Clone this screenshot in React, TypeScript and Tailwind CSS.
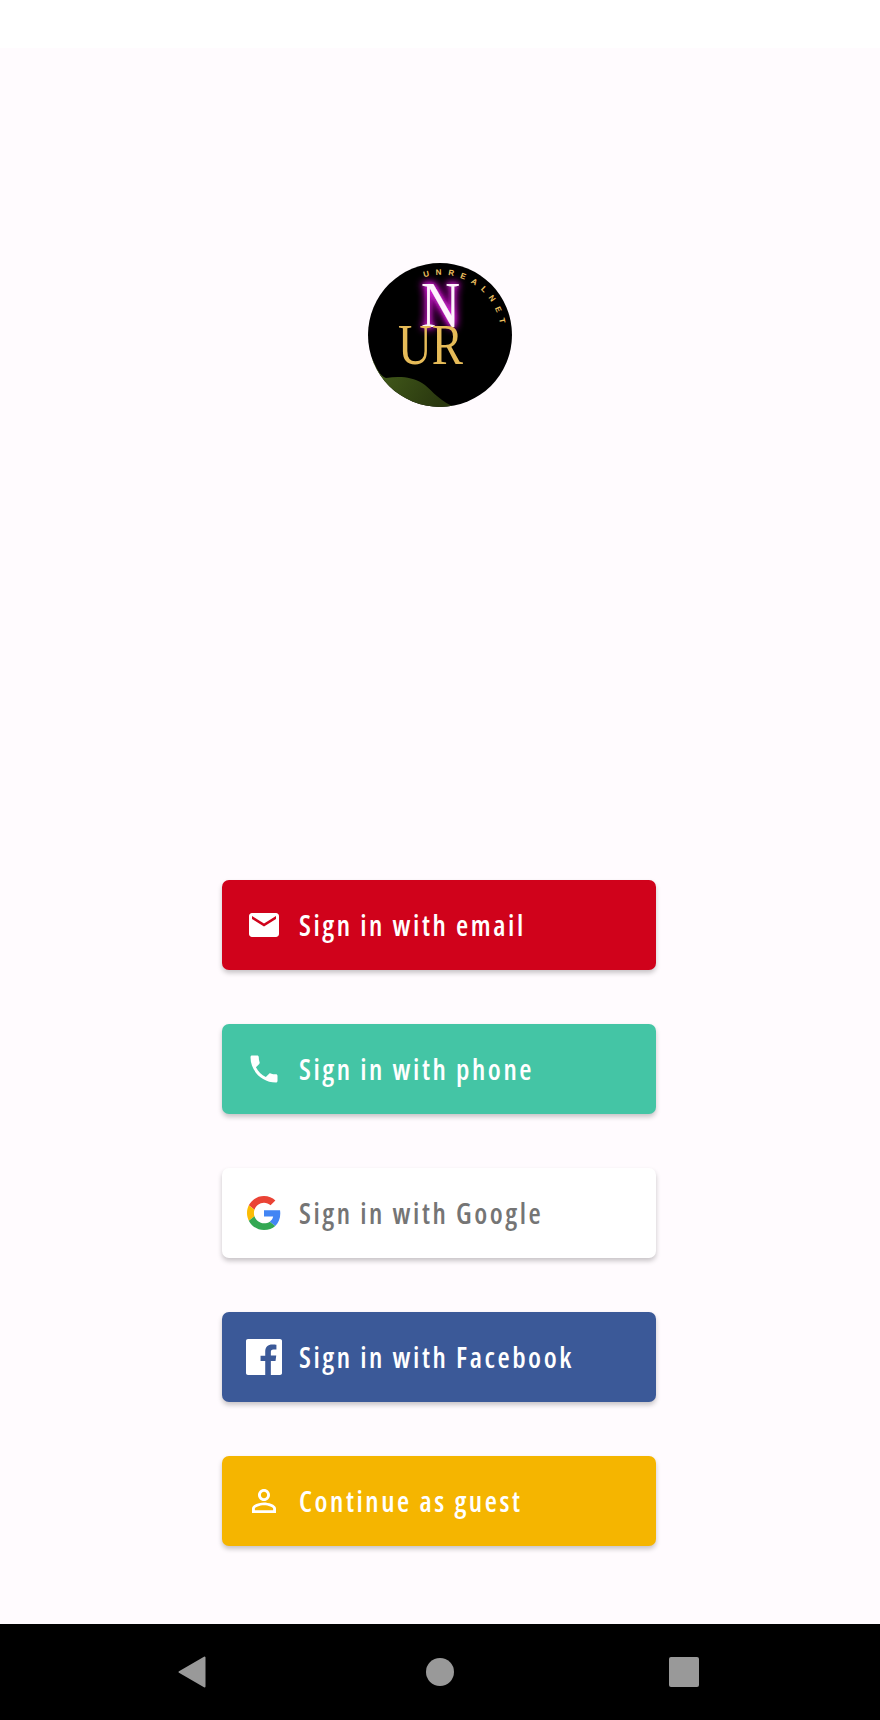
import React from "react";

const MailIcon = () => (
  <svg viewBox="0 0 24 24" className="w-9 h-9 shrink-0" fill="#fff">
    <path d="M20 4H4c-1.1 0-1.99.9-1.99 2L2 18c0 1.1.9 2 2 2h16c1.1 0 2-.9 2-2V6c0-1.1-.9-2-2-2zm0 4l-8 5-8-5V6l8 5 8-5v2z" />
  </svg>
);

const PhoneIcon = () => (
  <svg viewBox="0 0 24 24" className="w-9 h-9 shrink-0" fill="#fff">
    <path d="M6.62 10.79c1.44 2.83 3.76 5.14 6.59 6.59l2.2-2.2c.27-.27.67-.36 1.02-.24 1.12.37 2.33.57 3.57.57.55 0 1 .45 1 1V20c0 .55-.45 1-1 1-9.39 0-17-7.61-17-17 0-.55.45-1 1-1h3.5c.55 0 1 .45 1 1 0 1.25.2 2.45.57 3.57.11.35.03.74-.25 1.02l-2.2 2.2z" />
  </svg>
);

const GoogleIcon = () => (
  <svg viewBox="0 0 48 48" className="w-9 h-9 shrink-0 p-px">
    <path fill="#EA4335" d="M24 9.5c3.54 0 6.71 1.22 9.21 3.6l6.85-6.85C35.9 2.38 30.47 0 24 0 14.62 0 6.51 5.38 2.56 13.22l7.98 6.19C12.43 13.72 17.74 9.5 24 9.5z" />
    <path fill="#4285F4" d="M46.98 24.55c0-1.57-.15-3.09-.38-4.55H24v9.02h12.94c-.58 2.96-2.26 5.48-4.78 7.18l7.73 6c4.51-4.18 7.09-10.36 7.09-17.65z" />
    <path fill="#FBBC05" d="M10.53 28.59c-.48-1.45-.76-2.99-.76-4.59s.27-3.14.76-4.59l-7.98-6.19C.92 16.46 0 20.12 0 24c0 3.88.92 7.54 2.56 10.78l7.97-6.19z" />
    <path fill="#34A853" d="M24 48c6.48 0 11.93-2.13 15.89-5.81l-7.73-6c-2.15 1.45-4.92 2.3-8.16 2.3-6.26 0-11.57-4.22-13.47-9.91l-7.98 6.19C6.51 42.62 14.62 48 24 48z" />
  </svg>
);

const FacebookIcon = () => (
  <svg viewBox="0 0 24 24" className="w-9 h-9 shrink-0" fill="#fff">
    <path d="M22.68 0H1.32C.59 0 0 .59 0 1.32v21.36C0 23.41.59 24 1.32 24h11.5v-9.29H9.7v-3.62h3.12V8.41c0-3.1 1.89-4.79 4.66-4.79 1.33 0 2.47.1 2.8.14v3.24h-1.92c-1.5 0-1.79.71-1.79 1.76v2.31h3.59l-.47 3.62h-3.12V24h6.12c.73 0 1.32-.59 1.32-1.32V1.32C24 .59 23.41 0 22.68 0z" />
  </svg>
);

const PersonIcon = () => (
  <svg viewBox="0 0 24 24" className="w-9 h-9 shrink-0" fill="#fff">
    <path d="M12 5.9c1.16 0 2.1.94 2.1 2.1s-.94 2.1-2.1 2.1S9.9 9.16 9.9 8s.94-2.1 2.1-2.1m0 9c2.97 0 6.1 1.46 6.1 2.1v1.1H5.9V17c0-.64 3.13-2.1 6.1-2.1M12 4C9.79 4 8 5.79 8 8s1.79 4 4 4 4-1.79 4-4-1.79-4-4-4zm0 9c-2.67 0-8 1.34-8 4v3h16v-3c0-2.66-5.33-4-8-4z" />
  </svg>
);

const Logo = () => (
  <svg viewBox="0 0 144 144" className="w-36 h-36 block">
    <defs>
      <clipPath id="disc">
        <circle cx="72" cy="72" r="72" />
      </clipPath>
      <linearGradient id="moss" x1="0" y1="0" x2="1" y2="0.4">
        <stop offset="0" stopColor="#7aa61f" />
        <stop offset="0.22" stopColor="#41591a" />
        <stop offset="1" stopColor="#2a380f" />
      </linearGradient>
      <filter id="glow" x="-100%" y="-60%" width="300%" height="220%">
        <feFlood floodColor="#e024e0" result="tint" />
        <feComposite in="tint" in2="SourceAlpha" operator="in" result="shape" />
        <feGaussianBlur in="shape" stdDeviation="5" result="wide" />
        <feGaussianBlur in="shape" stdDeviation="2.5" result="near" />
        <feMerge>
          <feMergeNode in="wide" />
          <feMergeNode in="wide" />
          <feMergeNode in="near" />
          <feMergeNode in="SourceGraphic" />
        </feMerge>
      </filter>
      <path id="arc" d="M56 14.2 A60 60 0 0 1 132.5 64" fill="none" />
    </defs>
    <g clipPath="url(#disc)">
      <rect width="144" height="144" fill="#000" />
      <path d="M4 96 C9 106 12 113 18 115 C32 113 44 114 54 120 C62 125 68 135 84 143 L84 150 L0 150 Z" fill="url(#moss)" />
      <text x="53" y="64" fontFamily="'Liberation Serif', serif" fontSize="66" textLength="39" lengthAdjust="spacingAndGlyphs" fill="#fff2fd" filter="url(#glow)">N</text>
      <text x="30" y="101" fontFamily="'Liberation Serif', serif" fontSize="56" textLength="65" lengthAdjust="spacingAndGlyphs" fill="#e6bb58">UR</text>
      <text fontFamily="'Liberation Sans', sans-serif" fontSize="8" fontWeight="700" fill="#eec160">
        <textPath href="#arc" textLength="100">UNREALNET</textPath>
      </text>
    </g>
  </svg>
);

const buttons = [
  { label: "Sign in with email", bg: "bg-[#d0021b]", text: "text-white", icon: <MailIcon /> },
  { label: "Sign in with phone", bg: "bg-[#44c5a5]", text: "text-white", icon: <PhoneIcon /> },
  { label: "Sign in with Google", bg: "bg-white", text: "text-[#757575]", icon: <GoogleIcon /> },
  { label: "Sign in with Facebook", bg: "bg-[#3b5998]", text: "text-white", icon: <FacebookIcon /> },
  { label: "Continue as guest", bg: "bg-[#f5b500]", text: "text-white", icon: <PersonIcon /> },
];

export default function App() {
  return (
    <div className="w-[880px] h-[1720px] flex flex-col bg-white overflow-hidden">
      <div className="h-12 bg-white shrink-0" />
      <main className="flex-1 bg-[#fffbfe] flex flex-col items-center">
        <div className="mt-[215px] w-36 h-36">
          <Logo />
        </div>
        <div className="mt-[473px] w-[434px] ml-[-2px] flex flex-col gap-[54px]">
          {buttons.map((b) => (
            <button
              key={b.label}
              className={`h-[90px] w-full rounded-[7px] flex items-center pl-6 gap-[17px] shadow-[0_3px_5px_rgba(0,0,0,0.22)] ${b.bg}`}
            >
              {b.icon}
              <span
                className={`font-['Open_Sans',sans-serif] text-[28px] font-semibold tracking-[2.55px] whitespace-nowrap [font-stretch:75%] ${b.text}`}
              >
                {b.label}
              </span>
            </button>
          ))}
        </div>
      </main>
      <nav className="h-24 shrink-0 bg-black flex items-center">
        <svg viewBox="0 0 28 32" className="ml-[178px] w-7 h-8 shrink-0" fill="#999">
          <path d="M26.5 1.5 L26.5 30.5 L1.5 16 Z" stroke="#999" strokeWidth="2" strokeLinejoin="round" />
        </svg>
        <div className="ml-[220px] w-7 h-7 rounded-full bg-[#999]" />
        <div className="ml-[215px] w-[30px] h-[30px] rounded-[2px] bg-[#999]" />
      </nav>
    </div>
  );
}
